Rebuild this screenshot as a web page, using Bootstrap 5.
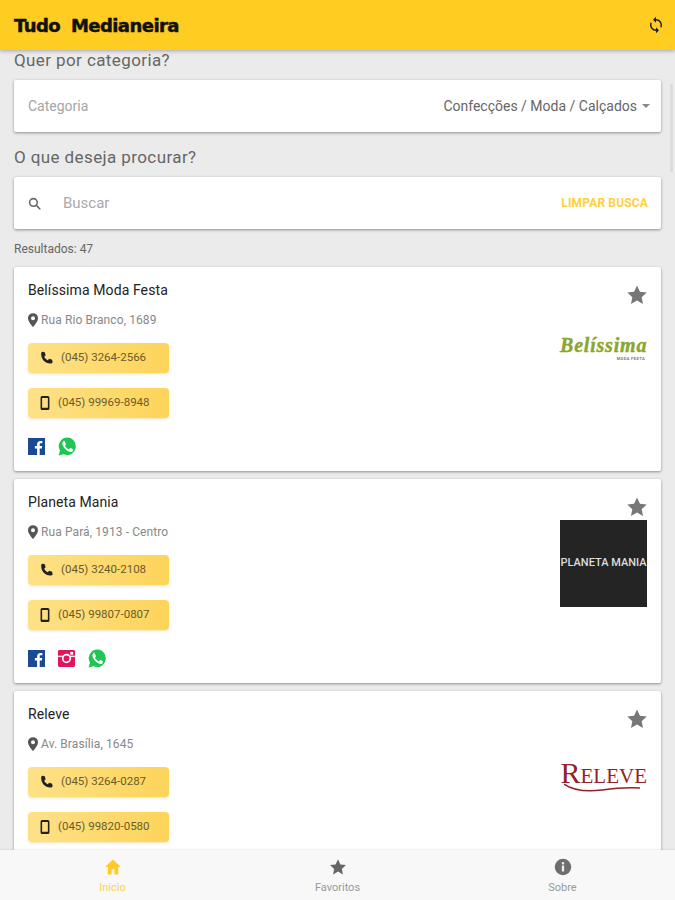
<!DOCTYPE html>
<html lang="pt-BR">
<head>
	<meta charset="UTF-8" />
	<title>Tudo Medianeira</title>
	<link href="https://cdn.jsdelivr.net/npm/bootstrap@5.3.3/dist/css/bootstrap.min.css" rel="stylesheet" />
	<style>
		html, body { height: 100%; }
		body { font-family: Roboto, "Liberation Sans", sans-serif; background: #ebebeb; color: #555; overflow: hidden; }
		.app-shell { height: 900px; }
		.top-bar { height: 50px; background: #ffcc22; box-shadow: 0 1px 4px rgba(0,0,0,.3); padding: 0 10px 0 14px; z-index: 2; }
		.brand-title { font-family: "DejaVu Sans", sans-serif; font-weight: 700; font-size: 18px; letter-spacing: -.55px; word-spacing: 5px; color: #111; -webkit-text-stroke: .5px #111; }
		.scroll-area { padding: 0 14px; overflow: hidden; min-height: 0; }
		.section-label { font-size: 17px; letter-spacing: .4px; line-height: 20px; color: #666; }
		.sheet { border: 0; border-radius: 2px; background: #fff; box-shadow: 0 1px 3px rgba(0,0,0,.4); }
		.filter-sheet { height: 52px; padding: 0 11px 0 14px; font-size: 14px; }
		.search-sheet { padding-right: 13px; }
		.field-hint { color: #a5a5a5; }
		.field-value { color: #666; font-size: 14px; }
		.field-value.dropdown-toggle::after { margin-left: 5px; vertical-align: 3px; border-top-width: 4px; border-left-width: 4px; border-right-width: 4px; color: #888; }
		.search-input { border: 0; outline: 0; padding: 0; margin-left: 22px; font-size: 15px; color: #666; min-width: 0; }
		.search-input::placeholder { color: #aaa; }
		.clear-link { color: #ffcf3d; font-size: 12px; font-weight: 700; letter-spacing: .15px; }
		.result-count { font-size: 12px; line-height: 14px; color: #666; margin: 12px 0; padding-top: 1px; height: 14px; }
		.shop-sheet { height: 204px; padding: 14px; margin-bottom: 8px; }
		.shop-name { font-size: 14px; line-height: 18px; color: #222; letter-spacing: .1px; }
		.shop-address { font-size: 12px; letter-spacing: .1px; line-height: 18px; color: #888; margin-top: 12px; gap: 3px; }
		.phone-chip { width: 141px; height: 30px; border: 0; border-radius: 4px; padding: 0 0 0 12px; gap: 8px; background: linear-gradient(90deg, #fee188, #fdd45a); color: #6b5a2a; font-size: 11.5px; box-shadow: 0 1px 2px rgba(240,200,90,.5); }
		.phone-chip:hover { background: linear-gradient(90deg, #fee188, #fdd45a); color: #6b5a2a; }
		.chip-gap { margin-top: 13.5px; }
		.chip-gap-next { margin-top: 15px; }
		.social-row { margin-top: 18.5px; height: 20px; gap: 13px; }
		.fav-star { margin-top: 3px; margin-right: -.5px; }
		.logo-box { width: 87px; }
		.logo-belissima { margin-top: 30px; height: 32px; }
		.bel-word { font-family: "Liberation Serif", serif; font-style: italic; font-weight: 700; font-size: 20px; line-height: 18px; letter-spacing: .8px; color: #8aa62e; -webkit-text-stroke: .4px #8aa62e; white-space: nowrap; }
		.bel-sub { font-size: 4px; line-height: 4px; margin-top: 3px; padding-right: 2px; font-weight: 700; color: #777; letter-spacing: .4px; white-space: nowrap; }
		.logo-planeta { margin-top: 2px; height: 87px; background: #242424; color: #ddd; font-size: 11px; font-weight: 500; white-space: nowrap; }
		.logo-releve { margin-top: 29px; height: 34px; position: relative; }
		.rel-word { font-family: "Liberation Serif", serif; font-size: 21px; line-height: 28px; color: #922228; white-space: nowrap; }
		.rel-word span { font-size: 30px; }
		.rel-swoosh { position: absolute; left: 4px; bottom: 0; }
		.page-scroll { position: absolute; left: 670px; top: 84px; width: 3px; height: 88px; background: #dcdcdc; border-radius: 2px; }
		.bottom-tabs { height: 50px; background: #f8f8f8; z-index: 2; box-shadow: 0 -1px 1px rgba(0,0,0,.05); }
		.tab-link { font-size: 11px; line-height: 12px; color: #999; padding-top: 8px; }
		.tab-link.tab-on { color: #ffd04a; }
		.tab-link svg { display: block; margin: 0 auto 6px; }
	</style>
</head>
<body>
	<svg width="0" height="0" class="position-absolute">
		<symbol id="i-star" viewBox="0 0 24 24"><path d="M12 1.6l3.2 6.9 7.4.9-5.5 5.1 1.5 7.4L12 18.1l-6.6 3.8 1.5-7.4L1.4 9.4l7.4-.9z"/></symbol>
		<symbol id="i-call" viewBox="3 2 18 18"><path d="M6.6 3.2l3 .6 1.2 4.200-2 2c1 2.100 2.700 3.800 4.900 4.900l2-2 4.100 1.200.6 3.100c.1 1.100-.8 2-1.900 2C10.500 20 4 13.500 4.700 5.100c.1-1.100.8-1.900 1.900-1.900z"/></symbol>
		<symbol id="i-mobile" viewBox="5 1 14 22"><path fill-rule="evenodd" d="M7.500 1h9A2.500 2.500 0 0 1 19 3.500v17a2.500 2.500 0 0 1-2.500 2.500h-9A2.500 2.500 0 0 1 5 20.500v-17A2.500 2.500 0 0 1 7.500 1zM7.500 4v15.500h9V4z"/></symbol>
		<symbol id="i-pin" viewBox="4 1 16 22"><path fill-rule="evenodd" d="M12 1a8 8 0 0 0-8 8c0 5.800 8 14 8 14s8-8.200 8-14a8 8 0 0 0-8-8zm0 4.800a3.200 3.200 0 1 1 0 6.400 3.200 3.200 0 0 1 0-6.400z"/></symbol>
		<symbol id="i-fb" viewBox="0 0 18 18"><rect width="18" height="18" fill="#1b4a94"/><path fill="#fff" d="M12.400 18v-6.800h2.300l.4-2.700h-2.700V6.900c0-.8.2-1.300 1.300-1.300h1.500V3.200c-.3 0-1.100-.1-2.100-.1-2.100 0-3.500 1.300-3.500 3.600v1.800H7.300v2.700h2.300V18z"/></symbol>
		<symbol id="i-wa" viewBox="0 0 20 20"><path fill="#1fc653" d="M10 .6a9.200 9.200 0 0 0-7.900 13.900L.6 19.600l5.200-1.400A9.200 9.200 0 1 0 10 .6z"/><path fill="#fff" d="M6.900 4.900c-.3 0-.7.100-1 .5-.4.400-1.200 1.200-1.200 2.800s1.200 3.300 1.400 3.500c.2.200 2.400 3.700 5.800 5 2.800 1 3.400.8 4-.1-.2.100-.1-.1 0-.1l.5-2.200c0-.2-.2-.3-.5-.5l-2-1c-.3-.1-.5-.1-.7.100l-.9 1.100c-.2.200-.3.200-.6.100-1.600-.7-3.100-2-4-3.600-.2-.3 0-.4.100-.6l.7-1c.1-.2.100-.4 0-.5l-.9-2.200c-.2-.5-.4-.5-.7-.5z" transform="translate(.2 -.6) scale(.95)"/></symbol>
		<symbol id="i-ig" viewBox="0 0 18 18"><rect width="18" height="18" rx="1.500" fill="#e2135f"/><rect x="0" y="6" width="18" height="1.500" fill="#fff" opacity=".85"/><circle cx="9" cy="9" r="4" fill="#e2135f" stroke="#fff" stroke-width="1.800"/><rect x="13" y="2" width="3" height="3" fill="#fff"/></symbol>
	</svg>

	<div class="app-shell d-flex flex-column">
		<header class="top-bar d-flex align-items-center justify-content-between flex-shrink-0 position-relative">
			<span class="brand-title">Tudo Medianeira</span>
			<svg width="18" height="18" viewBox="0 0 24 24" fill="#222"><path d="M12 4V1L8 5l4 4V6a6 6 0 0 1 5.600 8.200l1.500 1.500A8 8 0 0 0 12 4zm0 14a6 6 0 0 1-5.600-8.200L4.900 8.300A8 8 0 0 0 12 20v3l4-4-4-4z"/></svg>
		</header>

		<main class="scroll-area flex-grow-1">
			<div class="section-label">Quer por categoria?</div>
			<div class="sheet filter-sheet d-flex align-items-center justify-content-between" style="margin-top:10px">
				<span class="field-hint">Categoria</span>
				<span class="field-value dropdown-toggle">Confecções / Moda / Calçados</span>
			</div>

			<div class="section-label" style="margin-top:15px">O que deseja procurar?</div>
			<div class="sheet filter-sheet search-sheet d-flex align-items-center" style="margin-top:10px">
				<svg width="13" height="13" viewBox="0 0 24 24" class="flex-shrink-0" fill="none" stroke="#666" stroke-width="2.800" stroke-linecap="round"><circle cx="10" cy="10" r="7"/><path d="M15.500 15.500l6.500 6.500"/></svg>
				<input class="search-input flex-grow-1" type="text" placeholder="Buscar">
				<span class="clear-link">LIMPAR BUSCA</span>
			</div>

			<div class="result-count">Resultados: 47</div>

			<article class="sheet shop-sheet d-flex justify-content-between">
				<div>
					<div class="shop-name">Belíssima Moda Festa</div>
					<div class="shop-address d-flex align-items-center"><svg width="10" height="14" fill="#555"><use href="#i-pin"/></svg>Rua Rio Branco, 1689</div>
					<button class="btn phone-chip chip-gap d-flex align-items-center"><svg width="13" height="13" fill="#222"><use href="#i-call"/></svg>(045) 3264-2566</button>
					<button class="btn phone-chip chip-gap-next d-flex align-items-center"><svg width="10" height="14" fill="#222"><use href="#i-mobile"/></svg>(045) 99969-8948</button>
					<div class="social-row d-flex align-items-center"><svg width="17" height="17"><use href="#i-fb"/></svg><svg width="19" height="19"><use href="#i-wa"/></svg></div>
				</div>
				<div class="logo-box d-flex flex-column align-items-end">
					<svg class="fav-star" width="22" height="22" fill="#777"><use href="#i-star"/></svg>
					<div class="logo-belissima w-100 text-end">
						<div class="bel-word">Belíssima</div>
						<div class="bel-sub">MODA FESTA</div>
					</div>
				</div>
			</article>

			<article class="sheet shop-sheet d-flex justify-content-between">
				<div>
					<div class="shop-name">Planeta Mania</div>
					<div class="shop-address d-flex align-items-center"><svg width="10" height="14" fill="#555"><use href="#i-pin"/></svg>Rua Pará, 1913 - Centro</div>
					<button class="btn phone-chip chip-gap d-flex align-items-center"><svg width="13" height="13" fill="#222"><use href="#i-call"/></svg>(045) 3240-2108</button>
					<button class="btn phone-chip chip-gap-next d-flex align-items-center"><svg width="10" height="14" fill="#222"><use href="#i-mobile"/></svg>(045) 99807-0807</button>
					<div class="social-row d-flex align-items-center"><svg width="17" height="17"><use href="#i-fb"/></svg><svg width="17" height="17"><use href="#i-ig"/></svg><svg width="19" height="19"><use href="#i-wa"/></svg></div>
				</div>
				<div class="logo-box d-flex flex-column align-items-end">
					<svg class="fav-star" width="22" height="22" fill="#777"><use href="#i-star"/></svg>
					<div class="logo-planeta w-100 d-flex align-items-center justify-content-center">PLANETA MANIA</div>
				</div>
			</article>

			<article class="sheet shop-sheet d-flex justify-content-between">
				<div>
					<div class="shop-name">Releve</div>
					<div class="shop-address d-flex align-items-center"><svg width="10" height="14" fill="#555"><use href="#i-pin"/></svg>Av. Brasília, 1645</div>
					<button class="btn phone-chip chip-gap d-flex align-items-center"><svg width="13" height="13" fill="#222"><use href="#i-call"/></svg>(045) 3264-0287</button>
					<button class="btn phone-chip chip-gap-next d-flex align-items-center"><svg width="10" height="14" fill="#222"><use href="#i-mobile"/></svg>(045) 99820-0580</button>
				</div>
				<div class="logo-box d-flex flex-column align-items-end">
					<svg class="fav-star" width="22" height="22" fill="#777"><use href="#i-star"/></svg>
					<div class="logo-releve w-100 text-end">
						<div class="rel-word"><span>R</span>ELEVE</div>
						<svg class="rel-swoosh" width="76" height="10" viewBox="0 0 76 10" fill="none" stroke="#922228" stroke-width="1.500"><path d="M0 1c10 7 22 8 38 6 14-2 26-3 38-2"/></svg>
					</div>
				</div>
			</article>
		</main>

		<nav class="bottom-tabs row g-0 flex-shrink-0 position-relative">
			<a class="col-4 text-center text-decoration-none tab-link tab-on">
				<svg width="18" height="18" viewBox="0 0 24 24" fill="#ffc928"><path d="M12 2L1.500 12H5v10h5v-7h4v7h5V12h3.500z"/></svg>Início
			</a>
			<a class="col-4 text-center text-decoration-none tab-link">
				<svg width="18" height="18" fill="#666"><use href="#i-star"/></svg>Favoritos
			</a>
			<a class="col-4 text-center text-decoration-none tab-link">
				<svg width="18" height="18" viewBox="0 0 24 24"><circle cx="12" cy="12" r="11" fill="#6e6e6e"/><rect x="10.500" y="10" width="3" height="8" fill="#eee"/><rect x="10.500" y="5.500" width="3" height="3" fill="#eee"/></svg>Sobre
			</a>
		</nav>
		<div class="page-scroll"></div>
	</div>

	<script src="https://cdn.jsdelivr.net/npm/bootstrap@5.3.3/dist/js/bootstrap.bundle.min.js"></script>
</body>
</html>
